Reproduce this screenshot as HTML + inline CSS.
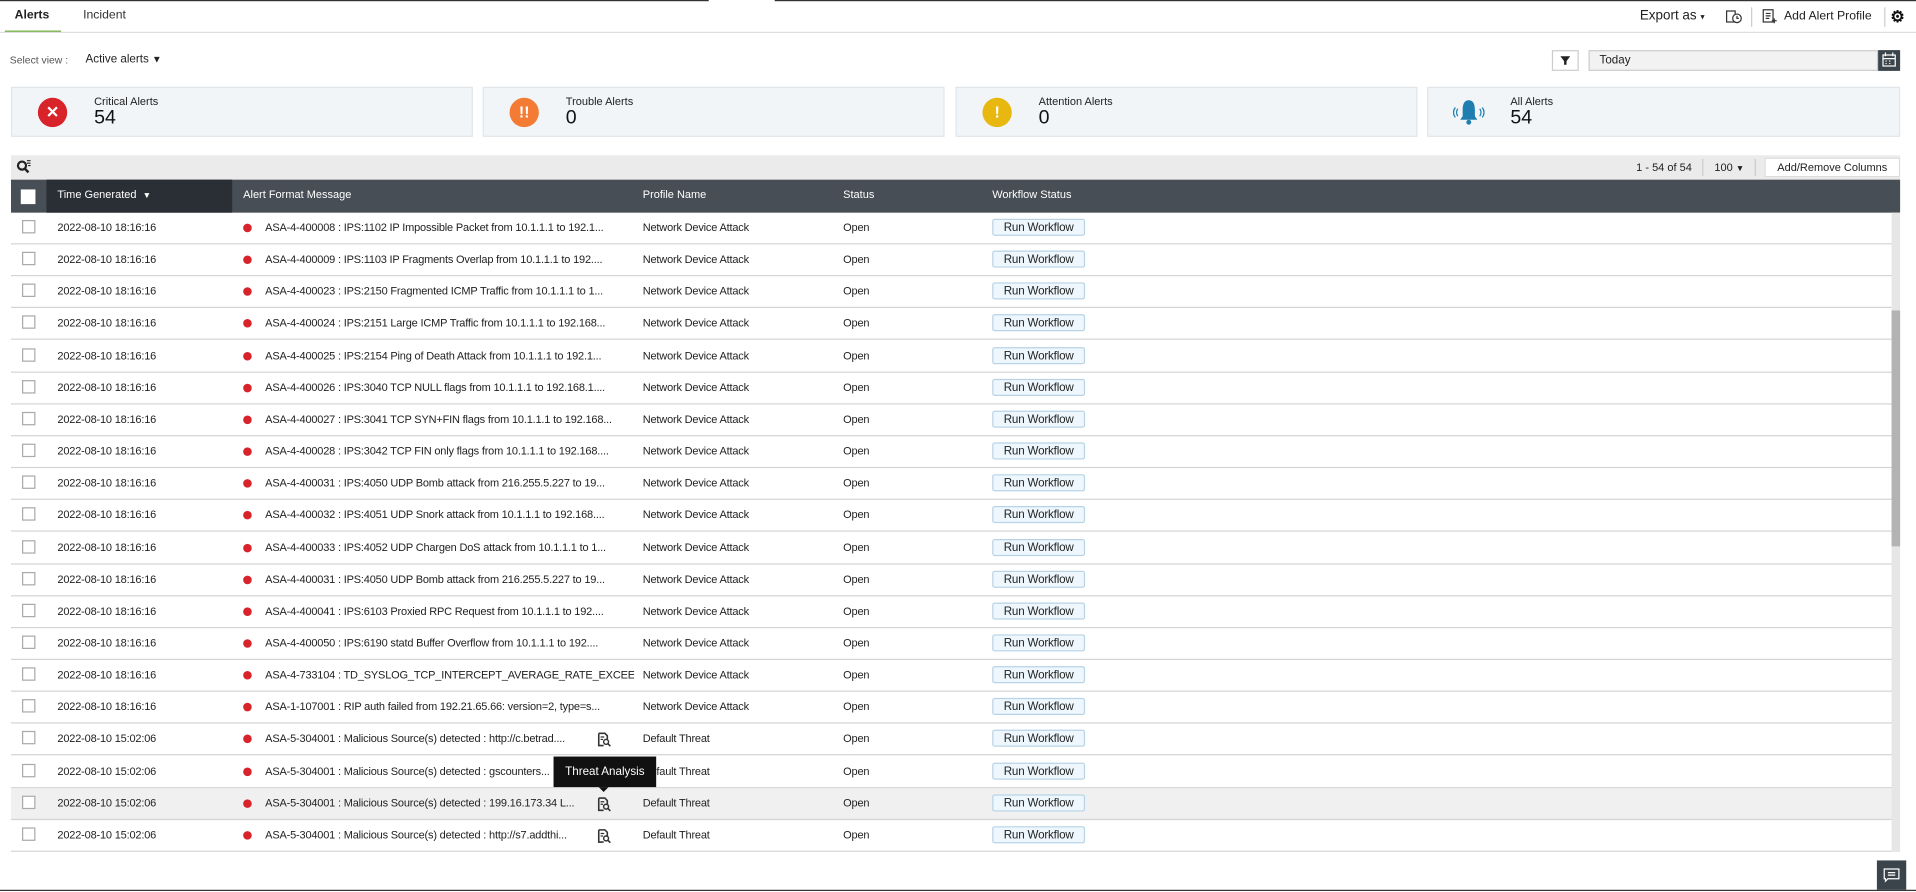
<!DOCTYPE html>
<html><head><meta charset="utf-8">
<style>
html,body{margin:0;padding:0;width:1916px;height:891px;overflow:hidden;background:#fff}
#r{position:absolute;left:0;top:0;width:1568px;height:729px;transform:scale(1.22194,1.2222);transform-origin:0 0;font-family:"Liberation Sans",sans-serif;color:#222;font-size:9px}
.a{position:absolute}
.topline1{left:0;top:0;width:580px;height:1px;background:#333}
.topline2{left:634px;top:0;width:934px;height:1px;background:#333}
.tabbar{left:0;top:26px;width:1568px;height:1px;background:#ddd}
.card{position:absolute;top:71px;height:41px;background:#f1f5f8;border:1px solid #e0e6ea;box-sizing:border-box}
.card .ic{position:absolute;left:21px;top:8px;width:24px;height:24px;border-radius:50%;color:#fff;font-weight:bold;text-align:center;line-height:24px;font-size:13px}
.card .lb{position:absolute;left:67px;top:6px;font-size:9px;color:#222}
.card .nm{position:absolute;left:67px;top:16px;font-size:16px;color:#111}
.row{position:absolute;left:9px;width:1539px;height:26px;border-bottom:1px solid #d4d4d4;box-sizing:border-box;font-size:9px;line-height:25px;letter-spacing:-0.15px}
.row span{position:absolute;white-space:nowrap}
.cb{left:9px;top:6px;width:11px;height:11px;border:1px solid #aaa;background:#fff;box-sizing:border-box}
.dot{left:190px;top:9px;width:7px;height:7px;border-radius:50%;background:#d8232a}
.btn{left:803px;top:5px;height:14px;line-height:13px;padding:0 2px;border:1px solid #b9d3e6;background:#eef7fd;border-radius:2px;font-size:9.5px;box-sizing:border-box;width:76px;text-align:center}
.hd span{position:absolute;color:#fff;font-size:9px;top:7px}
</style></head><body><div id="r">
<div class="a topline1"></div><div class="a topline2"></div>
<div class="a" style="left:12px;top:7px;font-size:10px;font-weight:bold">Alerts</div>
<div class="a" style="left:68px;top:7px;font-size:10px;color:#333">Incident</div>
<div class="a" style="left:4px;top:25px;width:46px;height:2px;background:#6fad3c"></div>
<div class="a tabbar"></div>
<div class="a" style="left:1342px;top:7px;font-size:11px">Export as <span style="font-size:7px">▾</span></div>
<svg class="a" style="left:1412px;top:8px" width="14" height="12" viewBox="0 0 14 12"><rect x="1" y="1" width="7" height="9" fill="none" stroke="#333" stroke-width="1"/><circle cx="9.5" cy="7" r="3.5" fill="#fff" stroke="#333"/><path d="M9.5 5v2h1.5" stroke="#333" fill="none"/></svg>
<div class="a" style="left:1433px;top:6px;width:1px;height:16px;background:#ccc"></div>
<svg class="a" style="left:1442px;top:7px" width="13" height="13" viewBox="0 0 13 13"><rect x="1" y="1" width="8" height="10" fill="none" stroke="#333"/><path d="M3 4h4M3 6h4M3 8h3M10 8v4M8 10h4" stroke="#333"/></svg>
<div class="a" style="left:1460px;top:8px;font-size:10px">Add Alert Profile</div>
<div class="a" style="left:1542px;top:6px;width:1px;height:16px;background:#ccc"></div>
<div class="a" style="left:1547px;top:6px;font-size:13px;font-weight:bold;color:#111">⚙</div>
<div class="a" style="left:8px;top:44px;font-size:8.5px;color:#555">Select view :</div>
<div class="a" style="left:70px;top:43px;font-size:9.5px">Active alerts <span style="font-size:8px">▼</span></div>
<div class="a" style="left:1270px;top:41px;width:22px;height:17px;border:1px solid #ccc;box-sizing:border-box"><svg width="20" height="15" viewBox="0 0 20 15"><path d="M6 4h8l-3 4v3h-2v-3z" fill="#222"/></svg></div>
<div class="a" style="left:1300px;top:41px;width:237px;height:17px;border:1px solid #ccc;background:#f2f2f2;box-sizing:border-box;padding-left:8px;line-height:15px;font-size:9.5px">Today</div>
<div class="a" style="left:1537px;top:41px;width:18px;height:17px;background:#3b444b"><svg width="18" height="17" viewBox="0 0 18 17"><rect x="4" y="4" width="10" height="9" fill="none" stroke="#fff"/><path d="M4 7h10M6 2v3M12 2v3M6 9h1M9 9h1M12 9h0M6 11h1M9 11h1" stroke="#fff"/></svg></div>
<div class="card" style="left:9px;width:378px"><div class="ic" style="background:#d8232a">✕</div><div class="lb">Critical Alerts</div><div class="nm">54</div></div>
<div class="card" style="left:395px;width:378px"><div class="ic" style="background:#f47b33">!!</div><div class="lb">Trouble Alerts</div><div class="nm">0</div></div>
<div class="card" style="left:782px;width:378px"><div class="ic" style="background:#e8b810">!</div><div class="lb">Attention Alerts</div><div class="nm">0</div></div>
<div class="card" style="left:1168px;width:387px"><svg style="position:absolute;left:20px;top:8px" width="26" height="24" viewBox="0 0 26 24"><path d="M13 2c-4 0-5 4-5 8v5l-2 3h14l-2-3v-5c0-4-1-8-5-8z" fill="#1e7eb0"/><circle cx="13" cy="20" r="2" fill="#1e7eb0"/><path d="M4 9q-2 3 0 6M2 8q-3 4 0 8M22 9q2 3 0 6M24 8q3 4 0 8" stroke="#1e7eb0" fill="none"/></svg><div class="lb">All Alerts</div><div class="nm">54</div></div>
<div class="a" style="left:9px;top:127px;width:1546px;height:20px;background:#ebebeb"></div>
<svg class="a" style="left:13px;top:130px" width="13" height="13" viewBox="0 0 13 13"><circle cx="5" cy="5.5" r="3.3" fill="none" stroke="#222" stroke-width="1.8"/><path d="M7.3 8l3 3" stroke="#222" stroke-width="2"/><path d="M9 1.5h3M9 3.5h3M10 5.5h2" stroke="#222" stroke-width="0.9"/></svg>
<div class="a" style="left:1339px;top:132px;font-size:9px">1 - 54 of 54</div>
<div class="a" style="left:1393px;top:130px;width:1px;height:14px;background:#ccc"></div>
<div class="a" style="left:1403px;top:132px;font-size:9px">100 <span style="font-size:7px">▼</span></div>
<div class="a" style="left:1436px;top:130px;width:1px;height:14px;background:#ccc"></div>
<div class="a" style="left:1444px;top:129px;width:111px;height:16px;background:#fff;border:1px solid #ddd;box-sizing:border-box;text-align:center;line-height:14px;font-size:9px">Add/Remove Columns</div>
<div class="a hd" style="left:9px;top:147px;width:1546px;height:27px;background:#474e55">
<div style="position:absolute;left:29px;top:0;width:152px;height:27px;background:#2a2f35"></div>
<div style="position:absolute;left:8px;top:8px;width:12px;height:12px;background:#fff"></div>
<span style="left:38px">Time Generated &nbsp;<span style="position:static;font-size:7px">▼</span></span>
<span style="left:190px">Alert Format Message</span>
<span style="left:517px">Profile Name</span>
<span style="left:681px">Status</span>
<span style="left:803px">Workflow Status</span>
</div>
<div class="a" style="left:1548px;top:174px;width:7px;height:523px;background:#e6e6e6"></div>
<div class="a" style="left:1548px;top:254px;width:7px;height:193px;background:#b3b3b3"></div>
<div id="rows"></div>
<div class="a" style="left:453px;top:619px;width:84px;height:25px;background:#111;color:#fff;font-size:9.5px;line-height:25px;text-align:center">Threat Analysis</div>
<div class="a" style="left:490px;top:644px;width:0;height:0;border-left:4px solid transparent;border-right:4px solid transparent;border-top:4px solid #111"></div>
<div class="a" style="left:1536px;top:704px;width:24px;height:24px;background:#3b444b"><svg width="24" height="24" viewBox="0 0 24 24"><path d="M6 7h12v8h-9l-2 2v-2h-1z" fill="none" stroke="#fff"/><path d="M9 10h6M9 12h6" stroke="#fff"/></svg></div>
<div class="a" style="left:0;top:728px;width:1568px;height:1px;background:#333"></div>
</div>
<script>
var d=[["2022-08-10 18:16:16","ASA-4-400008 : IPS:1102 IP Impossible Packet from 10.1.1.1 to 192.1...","Network Device Attack"],
["2022-08-10 18:16:16","ASA-4-400009 : IPS:1103 IP Fragments Overlap from 10.1.1.1 to 192....","Network Device Attack"],
["2022-08-10 18:16:16","ASA-4-400023 : IPS:2150 Fragmented ICMP Traffic from 10.1.1.1 to 1...","Network Device Attack"],
["2022-08-10 18:16:16","ASA-4-400024 : IPS:2151 Large ICMP Traffic from 10.1.1.1 to 192.168...","Network Device Attack"],
["2022-08-10 18:16:16","ASA-4-400025 : IPS:2154 Ping of Death Attack from 10.1.1.1 to 192.1...","Network Device Attack"],
["2022-08-10 18:16:16","ASA-4-400026 : IPS:3040 TCP NULL flags from 10.1.1.1 to 192.168.1....","Network Device Attack"],
["2022-08-10 18:16:16","ASA-4-400027 : IPS:3041 TCP SYN+FIN flags from 10.1.1.1 to 192.168...","Network Device Attack"],
["2022-08-10 18:16:16","ASA-4-400028 : IPS:3042 TCP FIN only flags from 10.1.1.1 to 192.168....","Network Device Attack"],
["2022-08-10 18:16:16","ASA-4-400031 : IPS:4050 UDP Bomb attack from 216.255.5.227 to 19...","Network Device Attack"],
["2022-08-10 18:16:16","ASA-4-400032 : IPS:4051 UDP Snork attack from 10.1.1.1 to 192.168....","Network Device Attack"],
["2022-08-10 18:16:16","ASA-4-400033 : IPS:4052 UDP Chargen DoS attack from 10.1.1.1 to 1...","Network Device Attack"],
["2022-08-10 18:16:16","ASA-4-400031 : IPS:4050 UDP Bomb attack from 216.255.5.227 to 19...","Network Device Attack"],
["2022-08-10 18:16:16","ASA-4-400041 : IPS:6103 Proxied RPC Request from 10.1.1.1 to 192....","Network Device Attack"],
["2022-08-10 18:16:16","ASA-4-400050 : IPS:6190 statd Buffer Overflow from 10.1.1.1 to 192....","Network Device Attack"],
["2022-08-10 18:16:16","ASA-4-733104 : TD_SYSLOG_TCP_INTERCEPT_AVERAGE_RATE_EXCEED","Network Device Attack"],
["2022-08-10 18:16:16","ASA-1-107001 : RIP auth failed from 192.21.65.66: version=2, type=s...","Network Device Attack"],
["2022-08-10 15:02:06","ASA-5-304001 : Malicious Source(s) detected : http://c.betrad....","Default Threat",1],
["2022-08-10 15:02:06","ASA-5-304001 : Malicious Source(s) detected : gscounters...","Default Threat",1],
["2022-08-10 15:02:06","ASA-5-304001 : Malicious Source(s) detected : 199.16.173.34 L...","Default Threat",1],
["2022-08-10 15:02:06","ASA-5-304001 : Malicious Source(s) detected : http://s7.addthi...","Default Threat",1]];
var h="";
for(var i=0;i<d.length;i++){var t=174+i*26.15;
h+='<div class="row" style="top:'+t+'px;'+(i==18?'background:#f0f0f0;':'')+'"><span class="cb"></span><span style="left:38px">'+d[i][0]+'</span><span class="dot"></span><span style="left:208px;width:'+(d[i][3]?262:302)+'px;overflow:hidden">'+d[i][1]+'</span>'+
(d[i][3]?'<svg style="position:absolute;left:480px;top:7px" width="11" height="12" viewBox="0 0 11 12"><path d="M1 1h5l2 2v3M1 1v10h4" fill="none" stroke="#333" stroke-width="1.3"/><path d="M2.5 4h3M2.5 6h2" stroke="#333"/><circle cx="7" cy="8" r="2" fill="none" stroke="#333" stroke-width="1.2"/><path d="M8.5 9.5l2 2" stroke="#333" stroke-width="1.3"/></svg>':'')+
'<span style="left:517px">'+d[i][2]+'</span><span style="left:681px">Open</span><span class="btn">Run Workflow</span></div>';}
document.getElementById("rows").innerHTML=h;
</script>
</body></html>
